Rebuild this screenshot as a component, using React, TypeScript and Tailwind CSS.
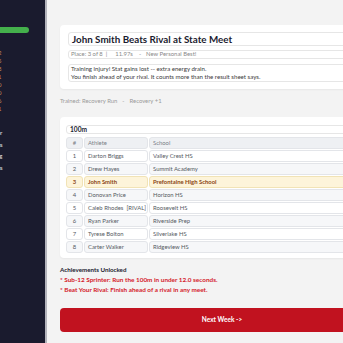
const rows = [
  { n: '1', a: 'Darton Briggs', s: 'Valley Crest HS' },
  { n: '2', a: 'Drew Hayes', s: 'Summit Academy' },
  { n: '3', a: 'John Smith', s: 'Prefontaine High School', me: true },
  { n: '4', a: 'Donovan Price', s: 'Horizon HS' },
  { n: '5', a: 'Caleb Rhodes  [RIVAL]', s: 'Roosevelt HS' },
  { n: '6', a: 'Ryan Parker', s: 'Riverside Prep' },
  { n: '7', a: 'Tyrese Bolton', s: 'Silverlake HS' },
  { n: '8', a: 'Carter Walker', s: 'Ridgeview HS' },
];

const stats = ['Speed 62', 'Stamina 55', 'Start 48', 'Form 51', 'Mental 60', 'Energy 70', 'Morale 66', 'Injury 1'];
const nav = ['Roster', 'Meets', 'Training', 'Rivals'];

function Cell({ children, className }: { children: React.ReactNode; className: string }) {
  return (
    <div className={`h-[12px] flex items-center border border-[#e3e5e9] rounded-[3px] whitespace-nowrap overflow-hidden ${className}`}>
      {children}
    </div>
  );
}

export default function App() {
  return (
    <div
      className="w-[343px] h-[343px] overflow-hidden flex bg-[#f3f3f3]"
      style={{ fontFamily: 'Lato, "Liberation Sans", sans-serif' }}
    >
      <aside className="w-[47px] shrink-0 h-full bg-[#1a1b2e] border-r-2 border-[#b3b3bb] overflow-hidden pt-[27px]">
        <div className="h-[6px] w-[29px] bg-[#44b04c] rounded-r-full" />
        <div className="mt-[16px] w-[1.5px] flex flex-col items-end">
          {stats.map((s) => (
            <div key={s} className="whitespace-nowrap text-[6px] leading-[8px] text-[#c98a5a]">{s}</div>
          ))}
        </div>
        <div className="mt-[14px] w-[2.5px] flex flex-col items-end">
          {nav.map((s) => (
            <div key={s} className="whitespace-nowrap text-[6.5px] leading-[11.7px] text-[#e5e7eb]">{s}</div>
          ))}
        </div>
      </aside>

      <main className="shrink-0 w-[340px] pl-[13px] pt-[25px]">
        <div className="w-[324px] flex flex-col">
          {/* Headline card */}
          <div className="bg-white rounded-[4px] shadow-[0_1px_2px_rgba(0,0,0,0.05)] px-[8px] pt-[7px] pb-[7px] flex flex-col">
            <div className="h-[14px] border border-[#e6e6e6] rounded-[3px] px-[3px] flex items-center">
              <span className="text-[9.8px] font-bold text-[#1b1b2f] whitespace-nowrap">John Smith Beats Rival at State Meet</span>
            </div>
            <div className="mt-[4px] h-[9px] border border-[#e6e6e6] rounded-[3px] px-[2px] flex items-center text-[5.9px] text-[#8a8a8a] whitespace-nowrap">
              <span>Place: 3 of 8</span>
              <span className="ml-[3px]">|</span>
              <span className="ml-[8px]">11.97s</span>
              <span className="ml-[6px]">-</span>
              <span className="ml-[5px]">New Personal Best!</span>
            </div>
            <div className="mt-[5px] h-[18px] border border-[#e6e6e6] rounded-[3px] px-[2px] flex flex-col justify-center text-[6.1px] leading-[8px] text-[#3a3a3a] whitespace-nowrap">
              <span>Training injury! Stat gains lost -- extra energy drain.</span>
              <span>You finish ahead of your rival. It counts more than the result sheet says.</span>
            </div>
          </div>

          <div className="mt-[8px] h-[8px] flex items-center text-[5.9px] text-[#9a9a9a] whitespace-nowrap">
            <span>Trained: Recovery Run</span>
            <span className="mx-[5px]">-</span>
            <span>Recovery +1</span>
          </div>

          {/* Results card */}
          <div className="mt-[12px] bg-white rounded-[4px] shadow-[0_1px_2px_rgba(0,0,0,0.05)] px-[6px] pt-[8px] pb-[5px]">
            <div className="h-[9px] border border-[#e6e6e6] rounded-[3px] px-[3px] flex items-center">
              <span className="text-[6.6px] font-bold text-[#1b1b2f]">100m</span>
            </div>
            <div className="mt-[3px] grid grid-cols-[17px_64px_1fr] gap-[1px] text-[5.9px] text-[#555a62]">
              <Cell className="bg-[#eef0f3] justify-center text-[#7a7f87]">#</Cell>
              <Cell className="bg-[#eef0f3] pl-[3px] text-[#7a7f87]">Athlete</Cell>
              <Cell className="bg-[#eef0f3] pl-[3px] text-[#7a7f87]">School</Cell>
              {rows.map((r, i) => {
                const bg = r.me ? 'bg-[#fdf4da] border-[#f1e3b6] font-bold text-[#8a4614]' : i % 2 === 1 ? 'bg-[#f6f7f9]' : 'bg-white';
                return [
                  <Cell key={r.n + 'n'} className={`${bg} justify-center`}>{r.n}</Cell>,
                  <Cell key={r.n + 'a'} className={`${bg} pl-[3px]`}><span className="whitespace-pre">{r.a}</span></Cell>,
                  <Cell key={r.n + 's'} className={`${bg} pl-[3px]`}>{r.s}</Cell>,
                ];
              })}
            </div>
          </div>

          {/* Achievements */}
          <div className="mt-[7px] font-bold leading-[10px] whitespace-nowrap">
            <div className="text-[6.2px] text-[#1b1b2f]">Achievements Unlocked</div>
            <div className="text-[6.4px] text-[#d3192a]">* Sub-12 Sprinter: Run the 100m in under 12.0 seconds.</div>
            <div className="text-[6.4px] text-[#d3192a]">* Beat Your Rival: Finish ahead of a rival in any meet.</div>
          </div>

          <button className="mt-[13px] h-[24px] w-full rounded-[4px] bg-[#c1121f] text-white text-[6.5px] font-bold flex items-center justify-center">
            Next Week -&gt;
          </button>
        </div>
      </main>
    </div>
  );
}
